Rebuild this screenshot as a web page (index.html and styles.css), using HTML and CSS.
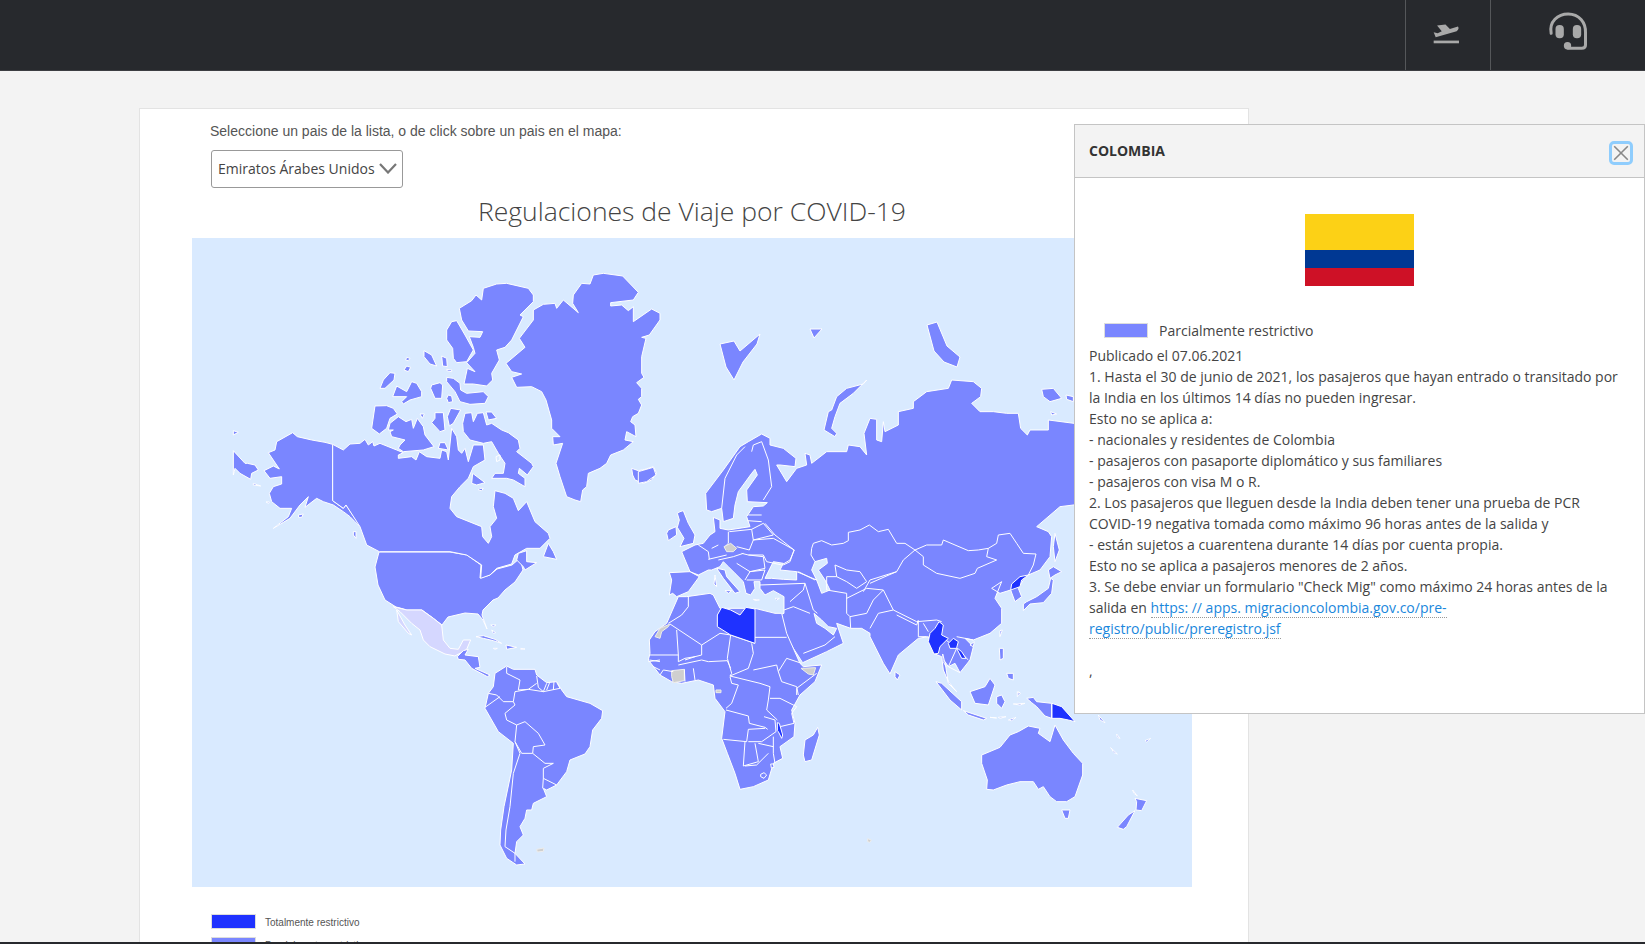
FILE: index.html
```html
<!DOCTYPE html>
<html lang="es">
<head>
<meta charset="utf-8">
<title>Regulaciones de Viaje por COVID-19</title>
<link rel="stylesheet" href="styles.css">
</head>
<body>
<header class="topbar">
  <div class="topcell topcell-flight">
    <svg class="icon-flight" viewBox="158 68 80 62" aria-hidden="true"><path d="M170 75L195 72L208 86L232 78Q237 85 228 92L166 110L160 95L172 98L184 92Z"/><rect x="160" y="120" width="75" height="8"/></svg>
  </div>
  <div class="topcell topcell-help">
    <svg class="icon-help" viewBox="500 30 128 126" aria-hidden="true"><path class="hs" d="M512 100C505 65 532 42 563 42C596 42 616 68 615 98V135Q615 145 604 145H562"/><rect x="525" y="75" width="25" height="40" rx="12"/><rect x="577" y="75" width="25" height="40" rx="12"/><circle cx="561" cy="137" r="11"/></svg>
  </div>
</header>
<main class="page">
  <section class="card">
    <p class="pick-label">Seleccione un pais de la lista, o de click sobre un pais en el mapa:</p>
    <div class="select"><span class="select-text">Emiratos Árabes Unidos</span>
      <svg class="chev" viewBox="0 0 18 11" aria-hidden="true"><path d="M1 1L9 9.500L17 1"/></svg></div>
    <h1 class="title">Regulaciones de Viaje por COVID-19</h1>
    <div class="map">
      <svg class="map-svg" viewBox="192 238 1000 649" width="1000" height="649" aria-label="Mapa mundial">
        <!-- Arctic islands, United States -->
        <path class="l" d="M720 344L734 341L740 351L760 334L757 344L743 362L734 380L726 367ZM810 329L822 329L814 338ZM927 325L937 322L947 346L960 357L957 367L944 362L934 351Z"/>
        <path class="l" d="M379 552L450 552L467 555L481 565L480 578L490 575L497 569L512 565L520 558L523 570L515 582L505 590L498 598L493 600L483 610L482 615L487 629L483 620L478 614L465 613L448 617L442 625L433 618L422 610L407 610L400 608L396 607L385 600L378 585L375 567Z"/>
        <!-- North America, Greenland -->
        <g transform="translate(190 260) scale(.33333)">
          <path class="l" d="M1210 45L1240 40L1298 48L1345 97L1330 120L1262 128L1262 138L1295 135L1315 152L1330 140L1330 185L1385 147L1410 160L1410 180L1378 225L1355 232L1368 235L1355 290L1355 340L1362 352L1340 368L1355 385L1355 410L1345 418L1355 435L1345 460L1328 470L1322 485L1335 495L1338 530L1310 515L1305 540L1330 545L1300 570L1262 585L1250 610L1230 625L1195 640L1190 680L1178 690L1172 725L1155 720L1130 710L1110 650L1098 610L1118 550L1090 555L1088 530L1110 530L1085 505L1085 480L1068 420L1055 395L1025 380L980 382L965 352L995 342L965 335L948 310L1005 262L988 235L1030 180L1030 150L1060 133L1095 130L1100 145L1120 120L1165 158L1148 130L1150 105L1175 70L1200 72Z"/>
          <path class="l" d="M1325 625L1345 632L1365 628L1390 620L1400 640L1385 660L1360 670L1335 660L1328 645Z"/>
          <path class="l" d="M875 120L880 85L920 72L950 70L1015 85L1030 105L1030 125L990 165L1000 170L965 240L945 262L920 270L928 300L905 340L908 360L890 378L850 372L822 372L832 325L855 335L830 308L855 280L850 262L838 230L870 232L878 215L835 213L815 180L808 145L845 122L858 105Z"/>
          <path class="l" d="M785 185L800 182L825 225L850 270L830 305L800 308L790 295L788 265L770 240L770 210Z"/>
          <path class="l" d="M650 292L660 295L655 302L647 300ZM650 318L662 322L655 335L642 330ZM702 272L725 285L740 318L720 312L702 290ZM755 288L770 295L772 320L758 318ZM770 328L785 330L785 335L772 333ZM600 338L615 340L612 360L585 385L570 385L580 360ZM620 378L650 395L665 365L680 370L695 395L695 410L660 420L640 432L635 425L650 410L608 410ZM725 375L750 368L758 375L755 415L735 415L722 385ZM770 352L790 355L810 370L812 390L830 400L880 395L895 410L885 430L840 433L810 425L795 395L770 365ZM775 405L785 408L788 425L775 428L770 415Z"/>
          <path class="l" d="M555 438L590 437L610 445L622 462L600 475L590 505L568 522L545 505ZM625 470L648 485L665 478L670 505L682 475L700 500L705 525L732 560L700 570L640 575L625 565L630 555L645 540L605 530L600 515L610 510L595 510L600 490ZM690 462L703 462L697 475ZM735 458L760 458L765 510L750 515L725 488L735 475ZM782 445L812 450L790 490L778 498L772 470ZM888 456L905 456L920 475L895 480Z"/>
          <path class="l" d="M825 460L845 458L850 485L862 460L880 458L890 495L905 490L935 510L955 518L985 540L990 565L980 575L1025 610L1030 620L1012 645L988 625L985 640L1005 655L1005 680L970 660L950 655L905 655L915 640L940 640L945 610L925 580L905 545L880 550L840 540L820 515L818 490Z"/>
          <path class="w" d="M918 590L930 585L930 600L920 605Z"/>
          <path class="l" d="M750 548L765 548L775 570L745 565ZM848 640L885 668L860 675L845 670ZM870 685L880 685L875 692L865 690ZM130 572L165 610L172 610L195 615L205 630L185 640L182 658L150 640L135 625L130 645ZM130 512L145 517L130 525ZM190 670L212 678L190 675ZM325 765L340 762L335 772L326 772ZM228 726L238 726L236 730ZM490 815L498 815L498 835L490 825Z"/>
          <path class="l" d="M260 545L308 518L322 530L365 540L405 547L428 553L428 722L460 745L468 735L498 780L510 790L510 800L495 785L480 770L460 755L430 735L400 725L380 715L345 742L355 710L330 735L300 775L250 805L295 770L305 745L270 745L245 725L238 700L250 680L275 672L275 650L240 655L222 632L250 618L268 627L235 578L255 570Z"/>
          <path class="l" d="M428 553L460 570L480 552L510 550L525 538L535 555L548 545L552 558L570 550L620 570L640 578L625 585L625 595L665 590L678 600L688 575L710 590L750 595L755 570L770 575L775 600L785 505L800 530L805 570L815 580L825 565L835 605L850 555L880 555L885 600L850 620L835 655L810 680L785 710L780 745L800 770L875 800L878 830L895 850L905 830L900 800L920 775L910 740L915 692L945 700L970 715L985 752L1010 725L1035 785L1075 820L1080 835L1050 865L1010 865L975 885L965 912L920 925L900 945L872 955L875 915L830 885L780 875L568 875L530 855L510 800L468 735L460 745L428 722Z"/>
          <path class="l" d="M1075 850L1090 875L1100 898L1060 890ZM985 880L1010 872L1010 905L1040 908L1005 930L1000 920L980 900Z"/>
        </g>
        <!-- Latin America -->
        <g transform="translate(400 590) scale(.33333)">
          <path class="m" d="M-20 50L0 55L20 60L65 60L100 85L125 105L130 150L150 175L175 178L190 150L212 150L200 178L190 185L170 195L165 198L135 192L90 170L70 150L60 120L35 100L0 65Z"/>
          <path class="m" d="M-10 60L15 105L35 135L25 130L-5 95Z"/>
          <path class="l" d="M172 200L190 182L205 178L195 195L235 200L240 232L225 235L270 255L262 260L215 235L195 210L175 208Z"/>
          <path class="l" d="M228 140L250 137L285 148L305 160L280 152L250 145ZM318 165L350 172L320 178ZM362 175L375 177L362 178ZM280 175L292 175L285 178ZM272 105L288 105L280 110ZM275 120L287 128L280 130Z"/>
          <path class="l" d="M320 228L340 238L405 238L410 255L440 278L470 275L485 300L500 320L570 340L608 362L605 385L578 420L570 470L555 492L510 510L500 545L470 585L440 600L430 595L440 620L400 640L395 660L380 660L375 685L360 710L370 735L350 755L345 790L375 822L350 825L320 805L300 765L302 720L312 650L335 540L340 460L295 425L255 355L265 310L280 290L285 250Z"/>
          <path class="b" d="M320 230L320 250L360 270L355 300L385 298L410 280M265 310L290 315L310 335L340 335L345 305L385 298M258 350L300 320M340 335L345 345L315 370L320 390L350 405L345 455M350 405L375 395L415 430L435 465L400 470L398 490L365 490L345 455M398 490L435 520L460 520L430 535L430 565L470 585M430 565L428 595M345 455L360 490L340 550L330 650L318 720L315 770L345 790L345 815M410 258L415 292L430 305L440 280M440 300L450 275M460 300L462 275M480 295L470 277M385 298L430 305L480 295"/>
          <path class="g" d="M410 778L432 774L430 784L412 786Z"/>
        </g>
        <!-- Eurasia -->
        <g transform="translate(640 380) scale(.33333)">
          <path class="l" d="M197 340L250 270L300 200L325 185L365 162L390 175L390 195L430 205L468 235L465 260L420 255L410 255L440 305L470 265L500 255L495 220L510 225L515 250L560 215L620 215L625 195L660 200L680 225L672 160L690 115L710 118L710 180L725 185L730 125L735 155L775 135L775 95L820 85L820 65L860 35L925 25L935 0L1000 5L1025 25L1022 50L995 70L1020 95L1060 95L1100 100L1135 100L1142 145L1162 165L1170 150L1225 150L1225 120L1340 135L1340 370L1260 380L1190 440L1225 455L1235 470L1230 530L1200 570L1165 585L1150 600L1135 625L1145 650L1125 665L1112 630L1080 640L1055 625L1085 605L1065 655L1085 685L1085 730L1050 760L1000 780L975 775L1000 800L990 840L960 878L945 850L925 860L915 845L925 910L950 935L925 905L910 870L905 830L880 820L865 770L835 775L775 825L750 882L730 850L690 770L690 760L665 745L632 745L590 730L610 790L560 815L488 848L460 805L405 710L432 700L432 650L400 632L375 645L360 625L360 605L342 605L345 625L332 645L318 640L310 605L285 580L265 560L250 545L240 560L215 570L205 570L175 585L150 575L125 515L165 495L190 490L210 465L225 455L220 412L240 420L240 445L265 450L330 440L320 410L340 380L370 378L382 368L322 365L320 330L352 285L345 268L335 280L295 335L285 375L280 415L250 425L245 385L215 395L200 390Z"/>
          <path class="l" d="M680 0L670 12L620 25L590 50L575 90L565 95L552 150L585 170L590 160L575 145L585 110L600 70L640 40Z"/>
          <path class="w" d="M375 595L400 545L430 550L420 570L470 575L470 600L430 598L395 595ZM525 545L560 535L562 550L535 570L555 600L570 630L545 640L530 600L515 570ZM522 700L545 720L565 740L590 745L580 765L555 745L530 730Z"/>
          <path class="l" d="M88 578L150 575L178 590L145 635L110 650L98 640L88 645L95 600ZM120 395L130 392L135 405L145 430L165 465L160 490L120 500L132 475L112 442L118 420L112 400ZM85 450L108 440L110 465L85 482L80 460ZM230 565L255 570L260 590L300 635L285 640L250 595ZM225 585L230 620L222 612ZM255 632L275 632L265 640ZM340 658L358 660L345 662ZM405 655L418 655L410 660ZM-5 275L40 262L48 285L20 305L-5 310Z"/>
          <path class="l" d="M1150 672L1150 692L1170 672L1210 668L1235 640L1240 600L1232 595L1225 625L1190 650L1160 665ZM1225 570L1240 560L1265 575L1245 585L1230 595ZM1245 460L1258 510L1245 545L1240 500ZM1205 28L1240 25L1265 55L1230 65L1210 50ZM1278 45L1300 50L1300 65L1280 58ZM1232 95L1250 102L1235 105ZM1080 752L1087 750L1080 770ZM990 795L1003 785L1000 800ZM765 875L780 885L772 900L765 890ZM888 905L905 910L965 965L965 990L930 960ZM970 992L1040 1015L1030 1020L985 1005ZM990 935L1035 920L1050 895L1065 915L1045 975L1005 970ZM1070 950L1085 945L1095 965L1085 985L1070 970ZM1078 805L1090 805L1090 835L1080 840ZM1100 880L1120 880L1120 900L1105 895ZM1135 935L1142 940L1135 945Z"/>
          <path class="b" d="M315 200L290 225L255 295L245 385M365 185L340 195L335 215M365 185L385 240L395 320L370 360M375 430L405 465L462 510L450 545L430 555M475 575L525 600M515 505L520 490L545 482L575 495L610 490L625 482L625 457L660 450L688 435L715 455L745 448L770 490L795 490L825 510L860 495L905 495L910 480L945 495L985 512L1015 510L1045 505L1070 490L1075 465L1110 460L1130 490L1150 520L1188 522L1180 555L1165 585M515 505L513 525L525 545M825 510L850 530L850 555L890 580L960 595L1005 580L1012 565L1070 540L1040 530L1045 505M825 510L790 540L770 575L735 590L690 610M585 555L590 590L620 605L650 625L680 605L660 575L620 570L585 555M560 590L590 590M670 635L690 600L770 575M560 590L560 630L620 640M620 655L680 625L730 630L700 660L680 700L630 710L632 745M730 630L760 690L715 700L690 745M620 640L620 700L630 710M495 610L520 690M760 690L830 725L890 720L905 725M770 705L830 735L835 720M835 725L835 770L860 770M432 690L460 680L510 700M490 820L555 795L585 770M450 665L490 630L495 610M360 615L495 610M470 575L530 600M532 700L520 690M850 730L865 755M925 860L960 878M905 770L950 805L925 860M950 805L985 840M1000 780L950 770"/>
          <path class="b" d="M175 495L205 515L208 538M265 455L265 490L255 500M205 538L260 525M268 455L335 448L340 480L328 510L290 500M335 448L370 430L400 465L340 480M322 422L365 425M325 405L365 405M340 480L400 475L463 510L450 540L425 555L380 545L370 525L325 525L305 520M235 540L280 530L310 520M325 525L370 530L375 565L330 575M290 550L330 575L315 600M330 575L375 570L365 600L320 600M215 505L235 495"/>
          <path class="g" d="M252 500L272 490L290 505L280 515L260 515Z"/>
          <path class="t" d="M897 725L910 735L905 765L925 775L900 800L895 820L882 822L865 785L870 760L885 745ZM908 822L918 860L910 845ZM925 790L940 775L955 785L950 803L965 815L978 835L965 835L950 805L930 805ZM1165 585L1145 600L1140 620L1112 630L1115 612L1140 590Z"/>
        </g>
        <!-- Africa -->
        <g transform="translate(640 500) scale(.33333)">
          <path class="l" d="M115 290L140 290L210 280L220 285L240 325L345 325L405 340L425 340L440 400L480 490L490 500L545 495L525 545L480 585L455 630L465 670L462 710L420 740L428 775L400 790L385 840L340 860L300 868L285 820L262 760L245 715L255 635L225 595L220 555L175 540L125 550L95 545L60 525L25 480L30 460L28 420L45 395L80 370Z"/>
          <path class="g" d="M45 410L60 385L90 372L85 380L65 395L60 415ZM483 505L527 503L520 525L505 522ZM95 512L133 508L133 542L100 548L95 530ZM228 570L243 570L243 578L228 578Z"/>
          <path class="b" d="M85 370L125 345L145 320L145 290M90 372L185 435L240 400L272 405L345 430M110 390L115 465L30 465M185 435L185 465L165 470L135 475L115 485L115 465M345 412L440 412M272 405L262 475L275 520L270 528L325 505L340 460L335 430M115 495L185 480L205 485L262 482L272 505M340 510L410 495L415 515L440 475L485 490M415 515L425 545L470 560L475 585M470 585L470 565L530 520M270 530L275 550L295 555L275 610L258 625M270 528L360 550L390 560L385 600L380 630L412 660M390 595L420 595L470 620L455 640L462 670L420 680M258 630L325 648L328 670L375 682L383 688M250 718L320 725L325 688L375 685M372 650L405 660L408 695L365 725L325 725M315 725L310 798L355 785L345 730M355 730L400 740M385 760L350 795L315 798M400 710L400 760L405 790M133 508L135 545M160 505L165 540M60 480L25 485M40 500L60 510M28 480L60 485M60 525L70 510L100 515M135 480L165 470"/>
          <path class="l" d="M533 682L538 705L515 780L495 785L490 765L495 720L520 705Z"/>
          <path class="g2" d="M362 823L372 818L380 825L372 835L362 830ZM392 792L400 792L402 802L394 804Z"/>
          <path class="t" d="M412 668L418 670L428 705L425 715L415 695L412 692Z"/>
          <path class="t" d="M232 345L245 322L272 330L300 345L318 322L345 327L345 430L272 405L232 380Z"/>
        </g>
        <!-- Oceania -->
        <g transform="translate(780 640) scale(.33333)">
          <path class="l" d="M740 175L760 172L770 185L815 190L815 235L795 228L770 200L755 188ZM605 345L660 322L690 285L715 275L745 258L780 265L775 280L810 305L825 255L850 300L880 340L908 370L908 405L885 470L860 485L830 485L810 470L790 440L775 448L760 425L720 425L680 435L640 450L620 448L622 420L605 370ZM845 510L870 510L865 535L855 535ZM1065 475L1100 482L1085 512L1068 510L1070 485ZM1065 512L1040 560L1030 568L1012 562L1045 525ZM1058 450L1072 468L1062 460ZM1010 282L1020 295L1012 292ZM992 323L1012 342L1002 338ZM1095 302L1112 295L1100 306ZM700 192L735 190L720 195ZM630 232L650 234ZM655 232L678 230L660 235ZM685 240L708 232L695 242ZM955 225L975 248L960 240ZM712 155L718 162L712 170Z"/>
          <path class="t" d="M816 190L845 200L885 245L865 240L840 235L816 235Z"/>
          <path class="g" d="M263 596L274 600L270 607L263 605Z"/>
        </g>
      </svg>
    </div>
    <ul class="legend">
      <li class="legend-row"><span class="swatch swatch-total"></span><span class="legend-text">Totalmente restrictivo</span></li>
      <li class="legend-row"><span class="swatch swatch-part"></span><span class="legend-text">Parcialmente restrictivo</span></li>
    </ul>
  </section>
</main>
<div class="bottomline"></div>
<aside class="panel">
  <div class="panel-head">
    <strong class="panel-title">COLOMBIA</strong>
    <button class="close" aria-label="Cerrar"><svg viewBox="0 0 20 20" aria-hidden="true"><path d="M1.500 1.500L18.500 18.500M18.500 1.500L1.500 18.500"/></svg></button>
  </div>
  <div class="panel-body">
    <div class="flag"><i class="flag-y"></i><i class="flag-b"></i><i class="flag-r"></i></div>
    <div class="status"><span class="status-swatch"></span>Parcialmente restrictivo</div>
    <p class="panel-text">Publicado el 07.06.2021<br>
    1. Hasta el 30 de junio de 2021, los pasajeros que hayan entrado o transitado por la India en los últimos 14 días no pueden ingresar.<br>
    Esto no se aplica a:<br>
    - nacionales y residentes de Colombia<br>
    - pasajeros con pasaporte diplomático y sus familiares<br>
    - pasajeros con visa M o R.<br>
    2. Los pasajeros que lleguen desde la India deben tener una prueba de PCR COVID-19 negativa tomada como máximo 96 horas antes de la salida y<br>
    - están sujetos a cuarentena durante 14 días por cuenta propia.<br>
    Esto no se aplica a pasajeros menores de 2 años.<br>
    3. Se debe enviar un formulario "Check Mig" como máximo 24 horas antes de la salida en <a class="panel-link" href="#">https: // apps. migracioncolombia.gov.co/pre-registro/public/preregistro.jsf</a><br>
    <br>
    ,</p>
  </div>
</aside>
```

FILE: styles.css
```css
* { box-sizing: border-box; }
html, body { margin: 0; height: 944px; overflow: hidden; }
body { display: flex; flex-direction: column; background: #f3f3f3; font-family: "Open Sans", sans-serif; color: #444; position: relative; }

.topbar { flex: 0 0 71px; display: flex; justify-content: flex-end; background: #27292d; border-bottom: 1px solid #3c3e42; }
.topcell { display: flex; align-items: center; justify-content: center; border-left: 1px solid #55575a; }
.topcell-flight { width: 85px; padding: 0 3px 3px 0; }
.topcell-help { width: 155px; padding-bottom: 9px; }
.icon-flight { width: 27px; height: 21px; fill: #a9a9a9; }
.icon-help { width: 43px; height: 42px; fill: #a9a9a9; }
.icon-help .hs { fill: none; stroke: #a9a9a9; stroke-width: 9; stroke-linecap: round; }

.page { flex: 1 1 auto; min-height: 0; overflow: hidden; padding: 37px 0 0 139px; }
.card { width: 1110px; height: 900px; background: #fff; border: 1px solid #e3e3e3; padding: 12px 0 0 52px; }
.pick-label { margin: 0 0 9px 18px; font: 14px/20px "Liberation Sans", Arial, sans-serif; color: #555; }
.select { margin-left: 19px; width: 192px; height: 38px; display: flex; align-items: center; justify-content: space-between; padding: 0 5px 0 6px; border: 1px solid #999; border-radius: 3px; font-size: 14px; color: #444; background: #fff; }
.select-text { margin-top: -2px; }
.chev { width: 18px; height: 11px; fill: none; stroke: #777; stroke-width: 2.200; margin-top: -2px; }
.title { width: 1000px; height: 50px; margin: 0; font-weight: 300; font-size: 26.500px; line-height: 46px; text-align: center; color: #444; }
.map { width: 1000px; height: 649px; background: #d9eaff; }
.map-svg { display: block; }
.l, .m, .t, .g, .g2, .w, .b { stroke: #fff; stroke-width: 1; stroke-linejoin: round; vector-effect: non-scaling-stroke; }
.l { fill: #7a86ff; }
.m { fill: #d5d7ff; }
.t { fill: #1f32ff; }
.g { fill: #cfcfcf; stroke: #ededed; }
.g2 { fill: #7a86ff; stroke: #fff; }
.w { fill: #d9eaff; }
.b { fill: none; }

.legend { list-style: none; margin: 27px 0 0 19px; padding: 0; }
.legend-row { display: flex; align-items: center; gap: 9px; height: 15px; margin-bottom: 8px; font: 10px/15px "Liberation Sans", Arial, sans-serif; color: #555; }
.legend-text { margin-top: 2px; }
.swatch { flex: none; width: 45px; height: 15px; border: 1px solid #ddd; }
.swatch-total { background: #1f32ff; }
.swatch-part { background: #7a86ff; }

.bottomline { position: absolute; left: 0; right: 0; bottom: 0; height: 2px; background: #27292d; }

.panel { position: absolute; left: 1074px; top: 124px; width: 571px; height: 590px; background: #fff; border: 1px solid #c4c4c4; }
.panel-head { height: 53px; display: flex; align-items: center; justify-content: space-between; padding: 0 11px 0 14px; background: #f3f3f3; border-bottom: 1px solid #c4c4c4; }
.panel-title { font-size: 14px; font-weight: 700; color: #333; margin-top: -2px; }
.close { width: 24px; height: 24px; padding: 1px; background: none; border: 3px solid #8fcdfd; border-radius: 5px; margin-top: 3px; }
.close svg { display: block; width: 100%; height: 100%; fill: none; stroke: #888; stroke-width: 2; }
.panel-body { padding: 36px 14px 0; }
.flag { width: 109px; height: 72px; margin: 0 auto; display: flex; flex-direction: column; }
.flag i { display: block; }
.flag-y { height: 36px; background: #fcd116; }
.flag-b { height: 18px; background: #003893; }
.flag-r { height: 18px; background: #ce1126; }
.status { display: flex; align-items: center; gap: 11px; margin-top: 34px; height: 21px; padding-left: 15px; font-size: 14px; line-height: 21px; }
.status-swatch { flex: none; width: 44px; height: 15px; background: #7a86ff; border: 1px solid #ddd; }
.panel-text { margin: 4px 0 0; font-size: 14px; line-height: 21px; color: #444; }
.panel-link { color: #1a87dc; text-decoration: none; border-bottom: 1px dotted #999; }
```
